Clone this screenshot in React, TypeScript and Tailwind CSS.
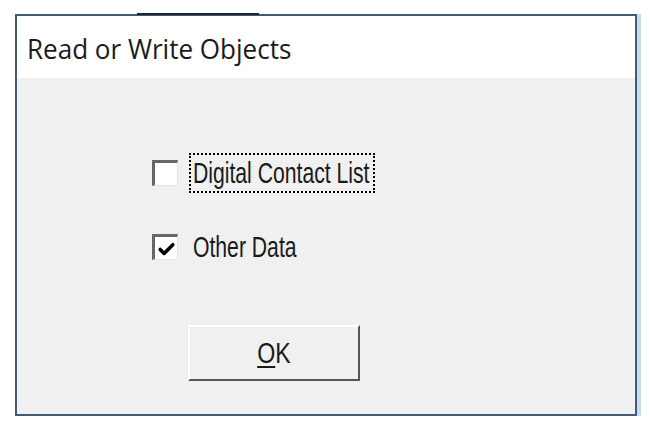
import { Check } from "lucide-react"

function CheckBox({ checked }: { checked: boolean }) {
  return (
    <div className="w-[26px] h-[26px] shrink-0 bg-white border-t-[3px] border-l-[3px] border-[#666] border-b border-r border-b-[#e3e3e3] border-r-[#e3e3e3] flex items-center justify-center">
      {checked && <Check size={19} strokeWidth={4.5} className="text-black mt-[2px]" />}
    </div>
  )
}

function Label({ text, focused }: { text: string; focused?: boolean }) {
  return (
    <div
      className={
        "h-[40px] w-[186px] flex items-center pl-[2px] overflow-visible border-2 border-dotted " +
        (focused ? "border-black" : "border-transparent")
      }
    >
      <span className="inline-block whitespace-nowrap origin-left scale-x-[0.73] text-[29px] leading-none text-[#1a1a1a] font-['Liberation_Sans',Arial,sans-serif]">
        {text}
      </span>
    </div>
  )
}

export default function App() {
  return (
    <div className="w-[652px] h-[430px] bg-white pt-[14px] pl-[15px] relative overflow-hidden">
      {/* selected cell edge behind the dialog */}
      <div className="absolute top-[13px] left-[137px] w-[122px] h-[2px] bg-[#1d2433]" />
      {/* light frame glow on the right */}
      <div className="absolute top-[14px] left-[637px] w-[4px] h-[402px] bg-[#c9dcec]" />

      <div className="w-[622px] h-[402px] border-2 border-[#455a72] flex flex-col">
        {/* Title bar */}
        <div className="h-[62px] bg-white flex items-center pl-[10px] pt-[2px]">
          <span className="inline-block whitespace-nowrap origin-left scale-x-[0.93] text-[28px] leading-none text-[#1a1a1a] font-['Open_Sans',sans-serif]">
            Read or Write Objects
          </span>
        </div>

        {/* Body */}
        <div className="flex-1 bg-[#f0f0f0] flex flex-col pl-[135px] pt-[75px] border-r-4 border-b-2 border-[#eef2f7]">
          <div className="flex items-center gap-[11px] h-[40px]">
            <CheckBox checked={false} />
            <Label text="Digital Contact List" focused />
          </div>
          <div className="flex items-center gap-[11px] h-[40px] mt-[34px]">
            <CheckBox checked />
            <Label text="Other Data" />
          </div>
          <button
            type="button"
            className="mt-[58px] ml-[36px] w-[172px] h-[56px] bg-[#f0f0f0] border-t-2 border-l-2 border-white border-b-2 border-r-2 border-b-[#555] border-r-[#555] flex items-center justify-center"
          >
            <span className="inline-block whitespace-nowrap scale-x-[0.8] text-[29px] leading-none text-[#1a1a1a] font-['Liberation_Sans',Arial,sans-serif]">
              <span className="underline underline-offset-[3px] decoration-2">O</span>K
            </span>
          </button>
        </div>
      </div>
    </div>
  )
}
